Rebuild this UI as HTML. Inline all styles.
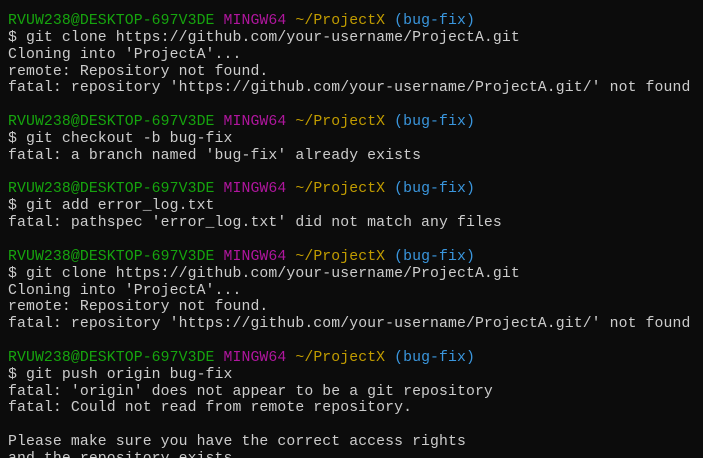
<!DOCTYPE html>
<html><head><meta charset="utf-8"><style>
html,body{margin:0;padding:0;background:#0c0c0c;width:703px;height:458px;overflow:hidden}
pre{margin:0;padding:13px 0 0 8px;font-family:"Liberation Mono","DejaVu Sans Mono",monospace;font-size:14.8px;letter-spacing:0.1px;line-height:16.85px;color:#cccccc;white-space:pre}
.g{color:#16a50e}.m{color:#b0169e}.y{color:#c19c00}.b{color:#3a96dd}
</style></head><body><pre><span class="g">RVUW238@DESKTOP-697V3DE</span> <span class="m">MINGW64</span> <span class="y">~/ProjectX</span> <span class="b">(bug-fix)</span>
$ git clone https://github.com/your-username/ProjectA.git
Cloning into 'ProjectA'...
remote: Repository not found.
fatal: repository 'https://github.com/your-username/ProjectA.git/' not found

<span class="g">RVUW238@DESKTOP-697V3DE</span> <span class="m">MINGW64</span> <span class="y">~/ProjectX</span> <span class="b">(bug-fix)</span>
$ git checkout -b bug-fix
fatal: a branch named 'bug-fix' already exists

<span class="g">RVUW238@DESKTOP-697V3DE</span> <span class="m">MINGW64</span> <span class="y">~/ProjectX</span> <span class="b">(bug-fix)</span>
$ git add error_log.txt
fatal: pathspec 'error_log.txt' did not match any files

<span class="g">RVUW238@DESKTOP-697V3DE</span> <span class="m">MINGW64</span> <span class="y">~/ProjectX</span> <span class="b">(bug-fix)</span>
$ git clone https://github.com/your-username/ProjectA.git
Cloning into 'ProjectA'...
remote: Repository not found.
fatal: repository 'https://github.com/your-username/ProjectA.git/' not found

<span class="g">RVUW238@DESKTOP-697V3DE</span> <span class="m">MINGW64</span> <span class="y">~/ProjectX</span> <span class="b">(bug-fix)</span>
$ git push origin bug-fix
fatal: 'origin' does not appear to be a git repository
fatal: Could not read from remote repository.

Please make sure you have the correct access rights
and the repository exists.
</pre></body></html>
